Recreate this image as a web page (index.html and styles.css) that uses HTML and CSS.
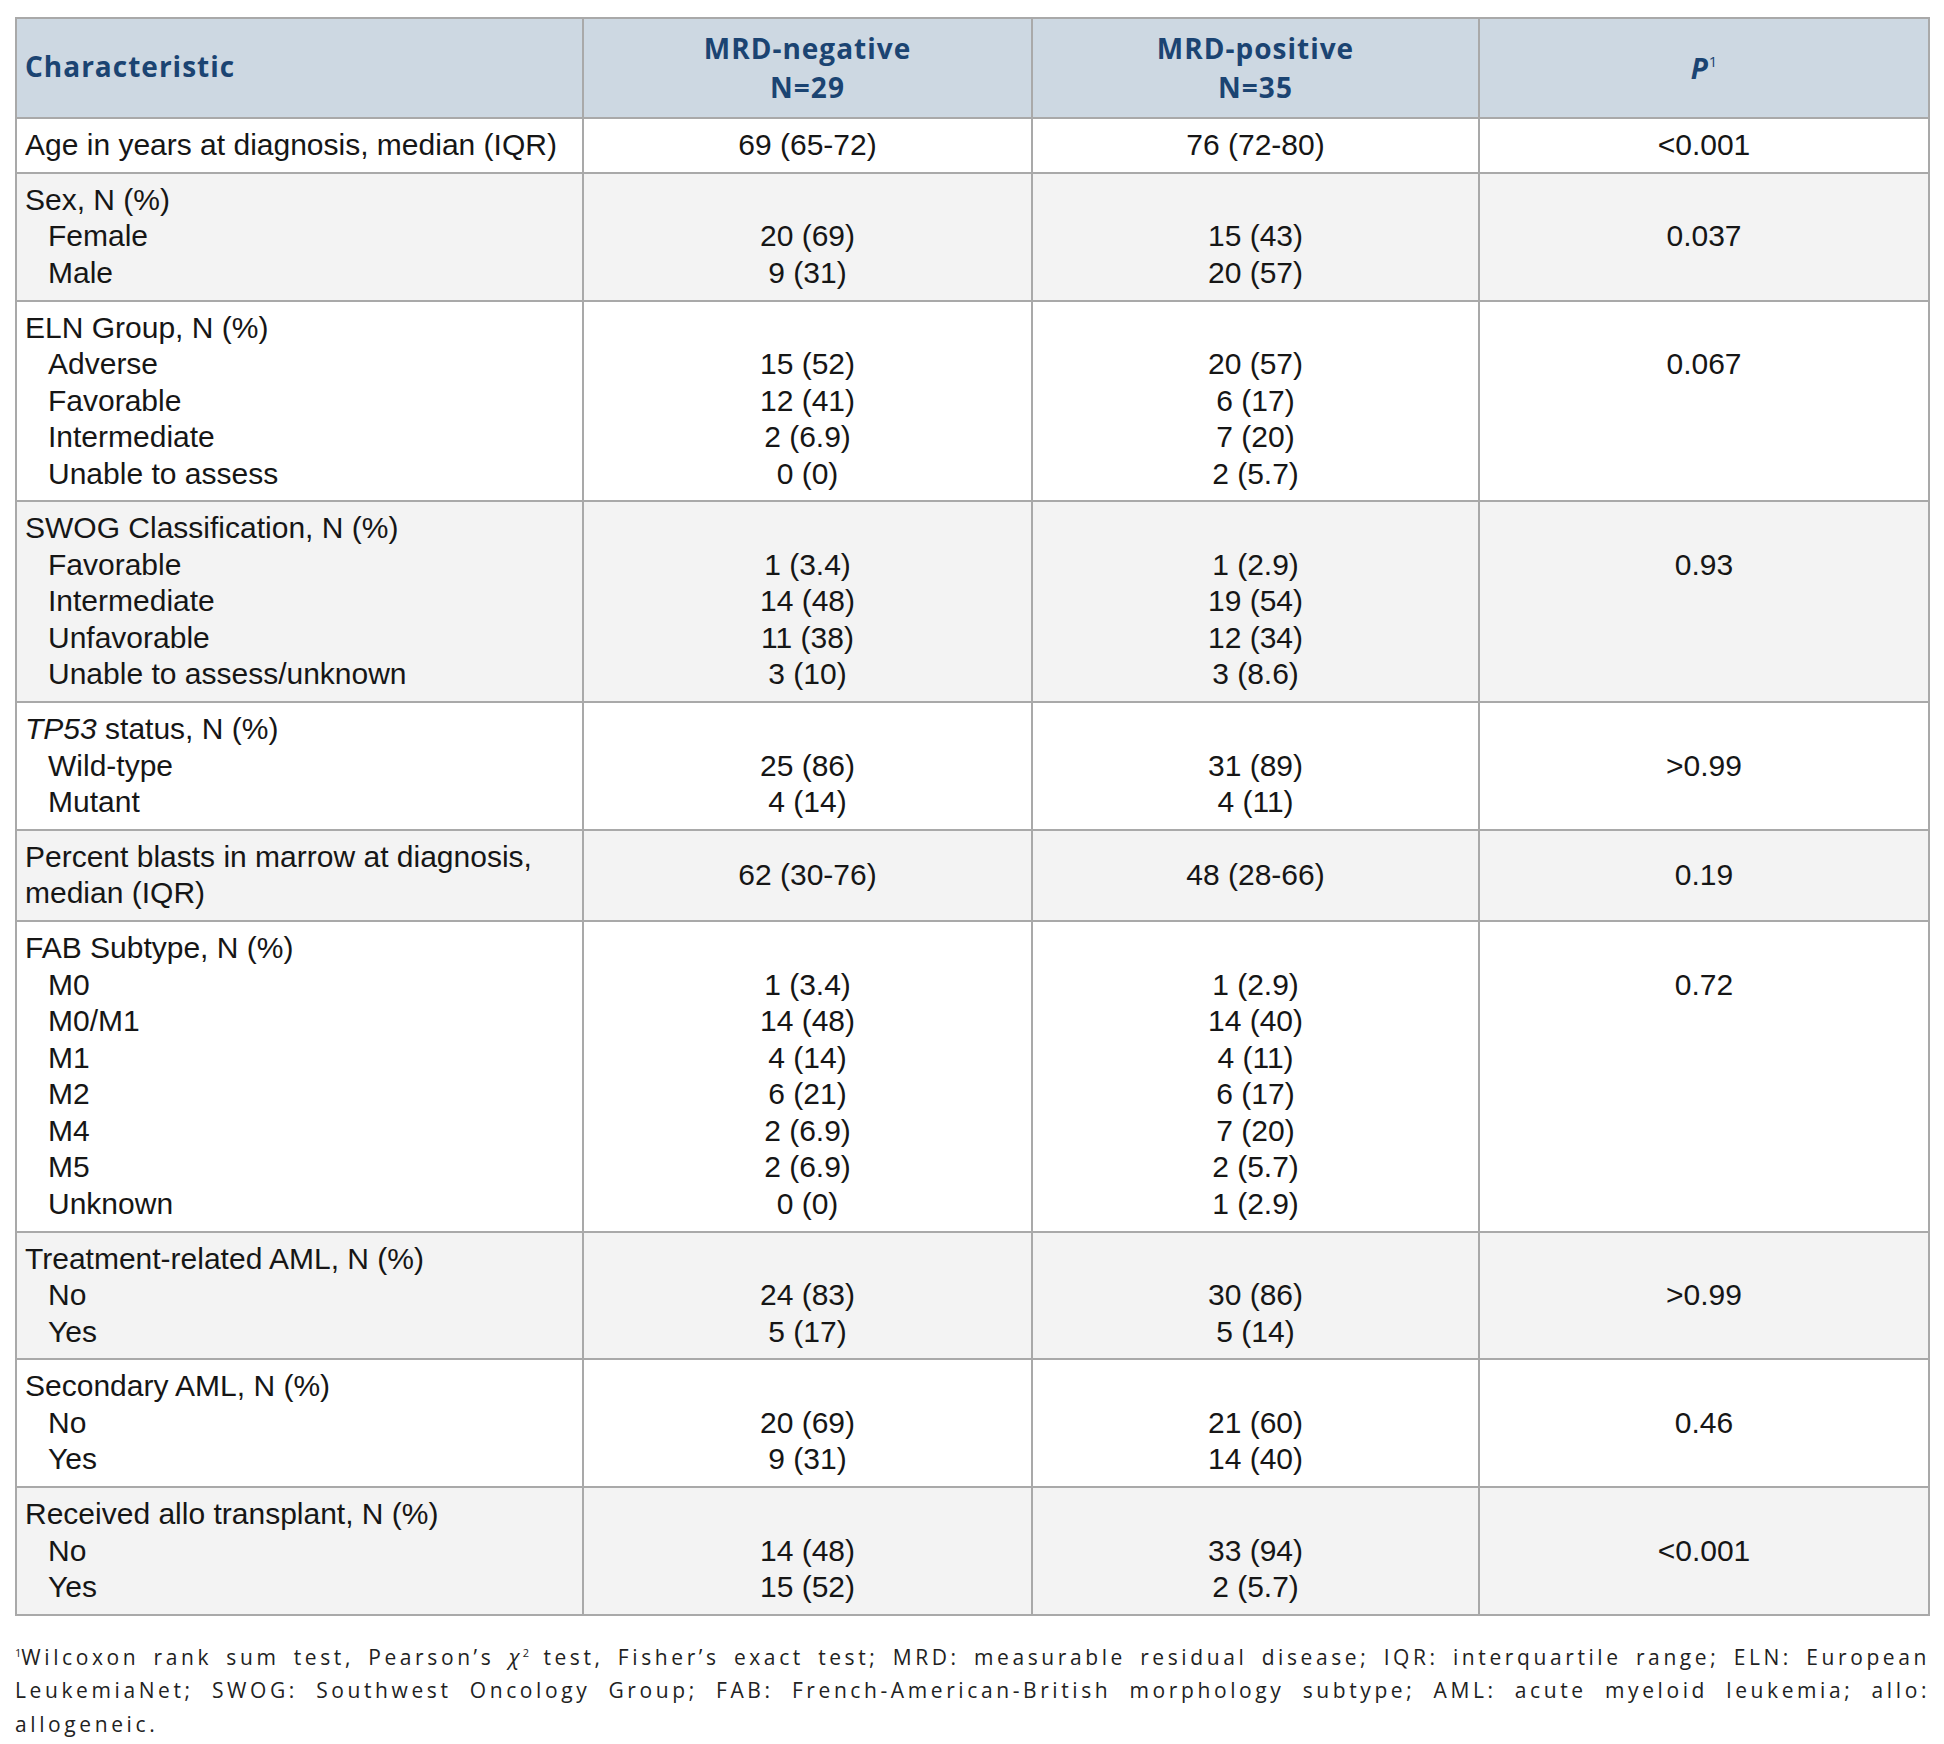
FILE: index.html
```html
<!DOCTYPE html>
<html lang="en">
<head>
<meta charset="utf-8">
<title>MRD characteristics</title>
<link rel="stylesheet" href="styles.css">
</head>
<body>
<div class="page">
<table class="t">
  <colgroup>
    <col class="w1"><col class="w2"><col class="w3"><col class="w4">
  </colgroup>
  <thead>
    <tr>
      <th class="c1">Characteristic</th>
      <th>MRD-negative<br>N=29</th>
      <th>MRD-positive<br>N=35</th>
      <th><i>P</i><sup>1</sup></th>
    </tr>
  </thead>
  <tbody>
    <tr>
      <td class="lab">Age in years at diagnosis, median (IQR)</td>
      <td>69 (65-72)</td>
      <td>76 (72-80)</td>
      <td>&lt;0.001</td>
    </tr>
    <tr>
      <td class="lab"><div>Sex, N (%)</div><div class="sub">Female</div><div class="sub">Male</div></td>
      <td class="lead"><div>20 (69)</div><div>9 (31)</div></td>
      <td class="lead"><div>15 (43)</div><div>20 (57)</div></td>
      <td class="lead">0.037</td>
    </tr>
    <tr>
      <td class="lab"><div>ELN Group, N (%)</div><div class="sub">Adverse</div><div class="sub">Favorable</div><div class="sub">Intermediate</div><div class="sub">Unable to assess</div></td>
      <td class="lead"><div>15 (52)</div><div>12 (41)</div><div>2 (6.9)</div><div>0 (0)</div></td>
      <td class="lead"><div>20 (57)</div><div>6 (17)</div><div>7 (20)</div><div>2 (5.7)</div></td>
      <td class="lead">0.067</td>
    </tr>
    <tr>
      <td class="lab"><div>SWOG Classification, N (%)</div><div class="sub">Favorable</div><div class="sub">Intermediate</div><div class="sub">Unfavorable</div><div class="sub">Unable to assess/unknown</div></td>
      <td class="lead"><div>1 (3.4)</div><div>14 (48)</div><div>11 (38)</div><div>3 (10)</div></td>
      <td class="lead"><div>1 (2.9)</div><div>19 (54)</div><div>12 (34)</div><div>3 (8.6)</div></td>
      <td class="lead">0.93</td>
    </tr>
    <tr>
      <td class="lab"><div><i>TP53</i> status, N (%)</div><div class="sub">Wild-type</div><div class="sub">Mutant</div></td>
      <td class="lead"><div>25 (86)</div><div>4 (14)</div></td>
      <td class="lead"><div>31 (89)</div><div>4 (11)</div></td>
      <td class="lead">&gt;0.99</td>
    </tr>
    <tr class="mid">
      <td class="lab">Percent blasts in marrow at diagnosis, median (IQR)</td>
      <td>62 (30-76)</td>
      <td>48 (28-66)</td>
      <td>0.19</td>
    </tr>
    <tr>
      <td class="lab"><div>FAB Subtype, N (%)</div><div class="sub">M0</div><div class="sub">M0/M1</div><div class="sub">M1</div><div class="sub">M2</div><div class="sub">M4</div><div class="sub">M5</div><div class="sub">Unknown</div></td>
      <td class="lead"><div>1 (3.4)</div><div>14 (48)</div><div>4 (14)</div><div>6 (21)</div><div>2 (6.9)</div><div>2 (6.9)</div><div>0 (0)</div></td>
      <td class="lead"><div>1 (2.9)</div><div>14 (40)</div><div>4 (11)</div><div>6 (17)</div><div>7 (20)</div><div>2 (5.7)</div><div>1 (2.9)</div></td>
      <td class="lead">0.72</td>
    </tr>
    <tr>
      <td class="lab"><div>Treatment-related AML, N (%)</div><div class="sub">No</div><div class="sub">Yes</div></td>
      <td class="lead"><div>24 (83)</div><div>5 (17)</div></td>
      <td class="lead"><div>30 (86)</div><div>5 (14)</div></td>
      <td class="lead">&gt;0.99</td>
    </tr>
    <tr>
      <td class="lab"><div>Secondary AML, N (%)</div><div class="sub">No</div><div class="sub">Yes</div></td>
      <td class="lead"><div>20 (69)</div><div>9 (31)</div></td>
      <td class="lead"><div>21 (60)</div><div>14 (40)</div></td>
      <td class="lead">0.46</td>
    </tr>
    <tr>
      <td class="lab"><div>Received allo transplant, N (%)</div><div class="sub">No</div><div class="sub">Yes</div></td>
      <td class="lead"><div>14 (48)</div><div>15 (52)</div></td>
      <td class="lead"><div>33 (94)</div><div>2 (5.7)</div></td>
      <td class="lead">&lt;0.001</td>
    </tr>
  </tbody>
</table>
<p class="note"><span class="ln just"><sup>1</sup>Wilcoxon rank sum test, Pearson’s <i>χ</i><sup>2</sup> test, Fisher’s exact test; MRD: measurable residual disease; IQR: interquartile range; ELN: European</span> <span class="ln just">LeukemiaNet; SWOG: Southwest Oncology Group; FAB: French-American-British morphology subtype; AML: acute myeloid leukemia; allo:</span> <span class="ln">allogeneic.</span></p>
</div>
</body>
</html>
```

FILE: styles.css
```css
* {
  box-sizing: border-box;
}

body {
  margin: 0;
  background: #ffffff;
  color: #161616;
  font-family: "Liberation Sans", Arial, sans-serif;
}

.page {
  padding: 17px 14px 0 15px;
}

.t {
  border-collapse: separate;
  border-spacing: 0;
  table-layout: fixed;
  width: 1915px;
  border-top: 2px solid #a9a9a9;
  border-left: 2px solid #a9a9a9;
}

.w1 { width: 567px; }
.w2 { width: 449px; }
.w3 { width: 447px; }
.w4 { width: 450px; }

.t th,
.t td {
  border-right: 2px solid #a9a9a9;
  border-bottom: 2px solid #a9a9a9;
}

.t th {
  height: 100px;
  padding: 0 8px;
  background: #cdd8e2;
  color: #1b4472;
  font-family: "Open Sans", "Liberation Sans", sans-serif;
  font-weight: 700;
  font-size: 28px;
  letter-spacing: 1px;
  line-height: 39px;
  text-align: center;
  vertical-align: middle;
}

.t th.c1 {
  text-align: left;
  padding-bottom: 3px;
}

.t th sup {
  font-size: 15px;
  font-weight: 400;
  letter-spacing: 0;
  vertical-align: 12px;
  line-height: 0;
}

.t td {
  padding: 8px 8px 8.3px;
  font-size: 30px;
  line-height: 36.5px;
  text-align: center;
  vertical-align: top;
  background: #ffffff;
}

.t tbody tr:nth-child(even) td {
  background: #f3f3f3;
}

.t td.lab {
  text-align: left;
}

.t td.lead {
  padding-top: 44.5px;
}

.t tr.mid td {
  vertical-align: middle;
}

.sub {
  padding-left: 23px;
}

.note {
  width: 1915px;
  margin: 25px 0 0;
  font-family: "Open Sans", "Liberation Sans", sans-serif;
  font-size: 21px;
  letter-spacing: 3.6px;
  line-height: 33.5px;
  color: #222222;
}

.note .ln {
  display: block;
  white-space: nowrap;
  text-align: left;
}

.note .ln.just {
  text-align: justify;
  text-align-last: justify;
}

.note sup {
  font-size: 11px;
  letter-spacing: 0;
  vertical-align: 8px;
  line-height: 0;
}
```
